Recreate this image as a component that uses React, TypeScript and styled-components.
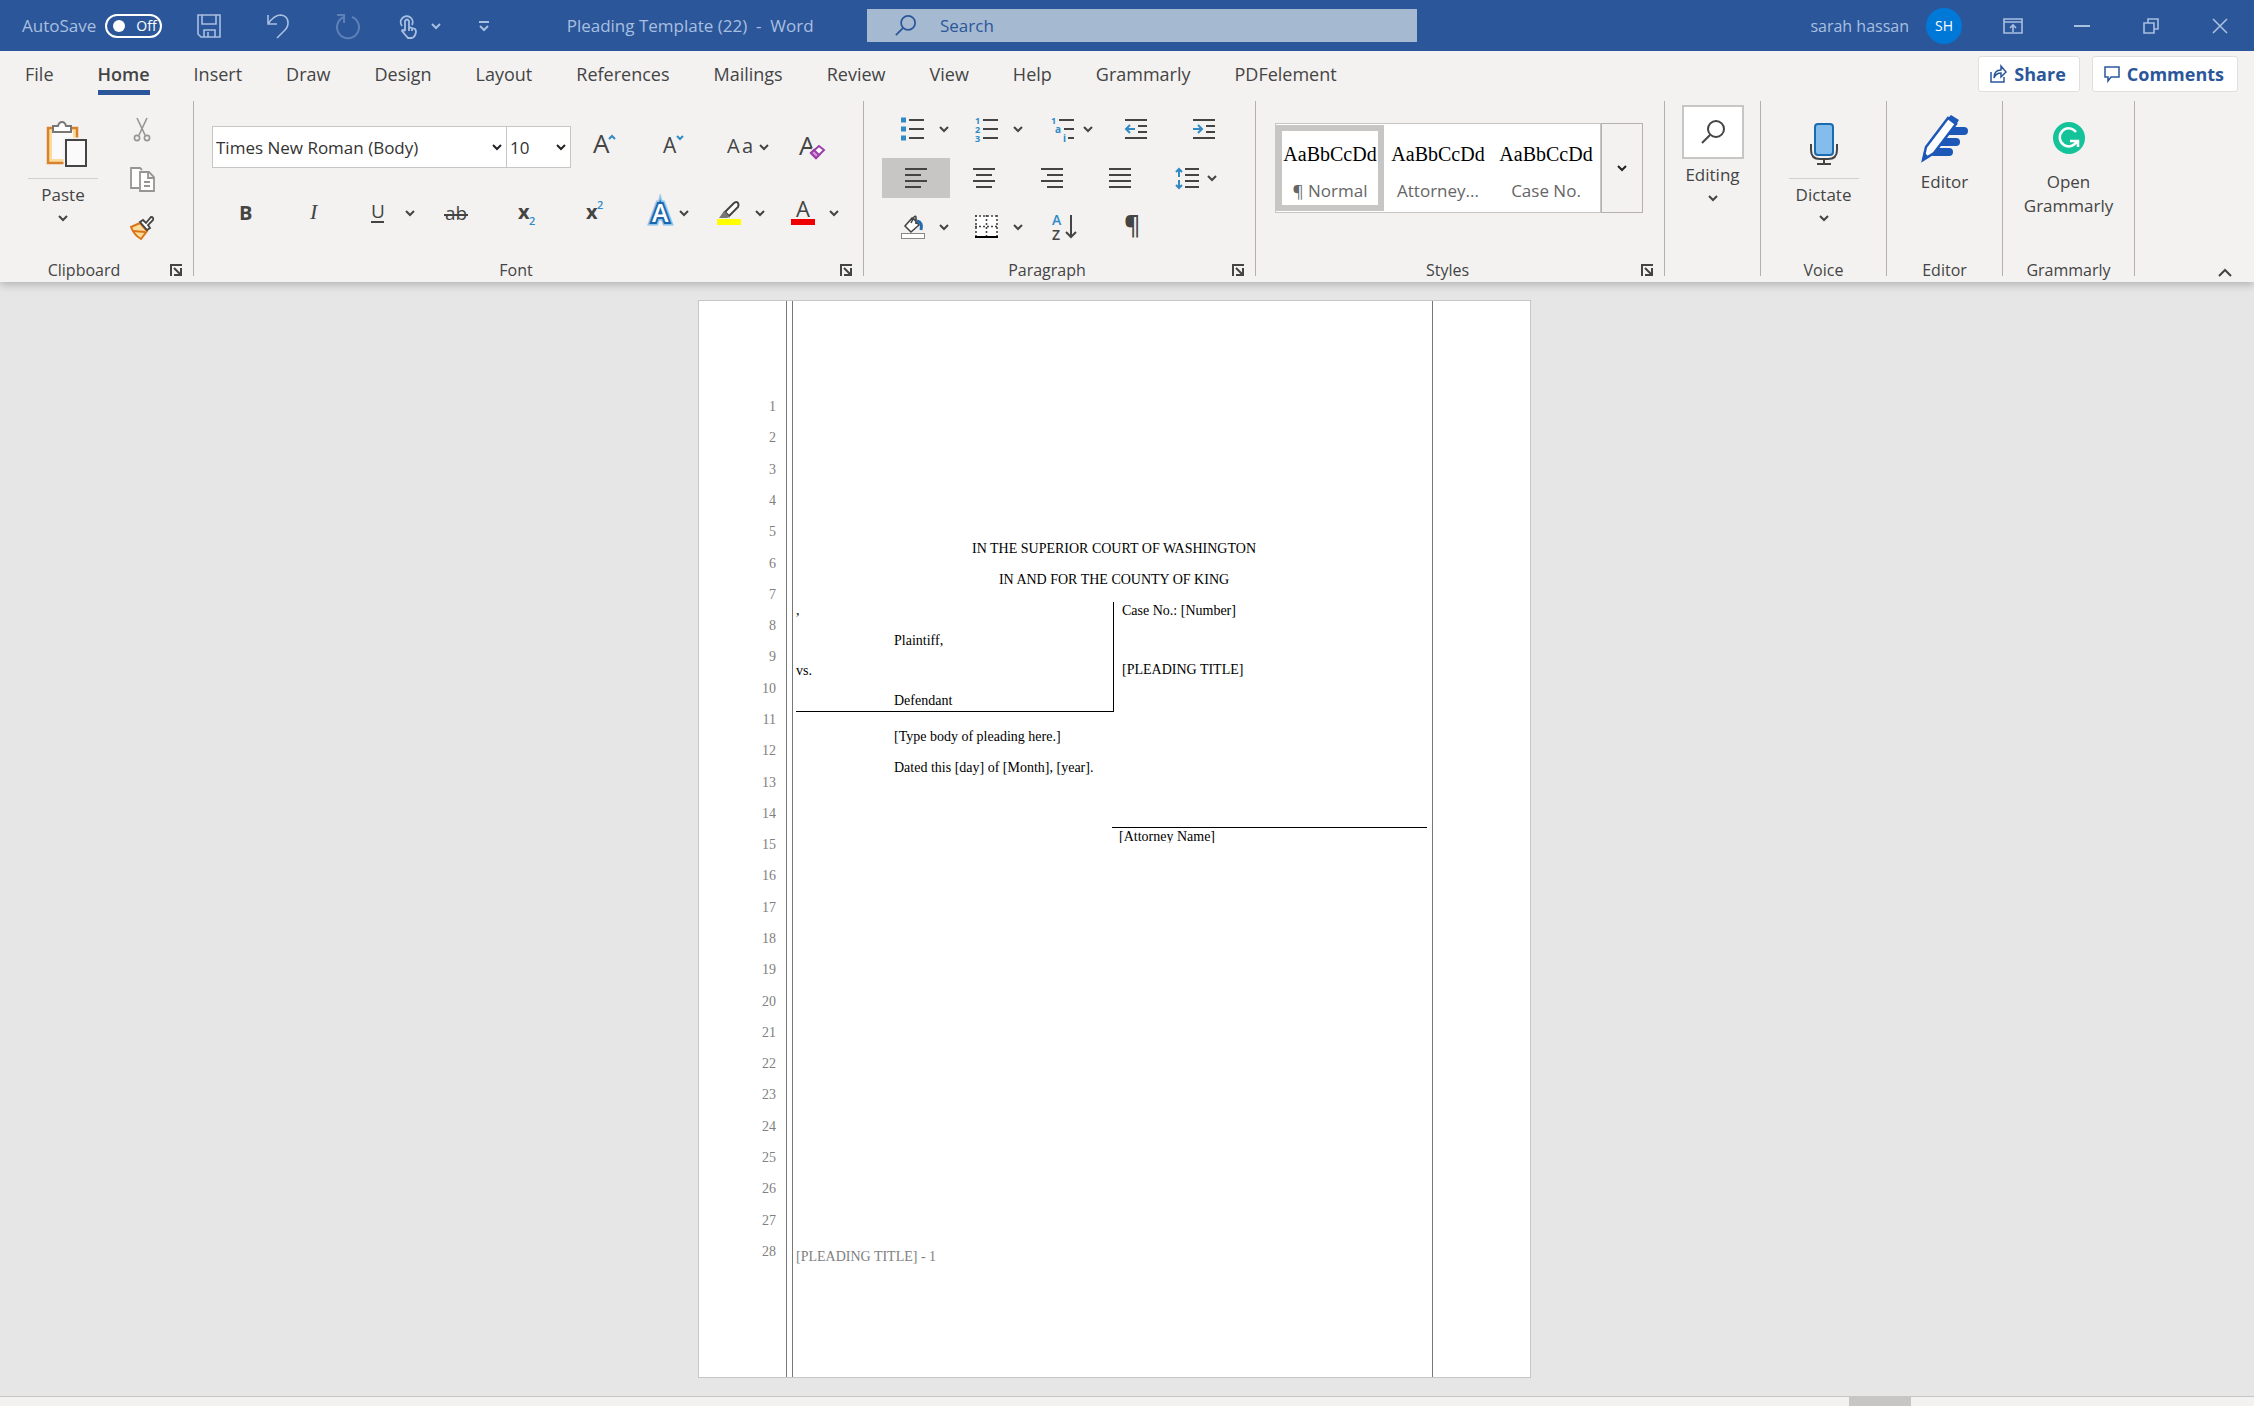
import React from "react";
import styled, { createGlobalStyle, css } from "styled-components";

const ui = '"Open Sans", "Noto Sans", sans-serif';
const serif = '"Liberation Serif", "Times New Roman", serif';
const ink = "#444444";
const brand = "#2b579a";
const accent = "#2f8ac6";
const titleInk = "#a9bfe0";

const GlobalStyle = createGlobalStyle`
  *, *::before, *::after { box-sizing: border-box; }
  body { margin: 0; font-family: ${ui}; color: ${ink}; background: #e6e6e6; }
  button, input, select { font: inherit; color: inherit; margin: 0; }
  button { border: 0; padding: 0; background: none; cursor: pointer; }
  svg { display: block; overflow: visible; flex: none; }
`;

const Window = styled.div`
  min-height: 100vh;
  display: flex;
  flex-direction: column;
`;

/* ---------- Title bar ---------- */

const TitleBar = styled.header`
  display: grid;
  grid-template-columns: 867fr 550fr 837fr;
  align-items: center;
  height: 51px;
  background: ${brand};
  color: ${titleInk};
  font-size: 17px;
`;

const TitleLeft = styled.div`
  display: flex;
  align-items: center;
  padding-left: 22px;
`;

const AutoSave = styled.label`
  display: flex;
  align-items: center;
  gap: 9px;
  margin-right: 12px;
`;

const Pill = styled.span`
  display: flex;
  align-items: center;
  gap: 11px;
  width: 57px;
  height: 24px;
  padding-left: 6px;
  border: 2px solid #ffffff;
  border-radius: 12px;
  color: #ffffff;
  font-size: 14px;
`;

const Knob = styled.input`
  appearance: none;
  width: 12px;
  height: 12px;
  border-radius: 50%;
  background: #ffffff;
`;

const QuickButton = styled.button<{ $width?: number; $dim?: boolean }>`
  display: flex;
  align-items: center;
  justify-content: center;
  gap: 14px;
  width: ${(p) => p.$width ?? 69}px;
  height: 40px;
  opacity: ${(p) => (p.$dim ? 0.4 : 1)};
`;

const DocName = styled.div`
  flex: 1;
  padding-left: 4px;
  text-align: center;
  white-space: pre;
`;

const SearchBox = styled.label`
  display: flex;
  align-items: center;
  gap: 24px;
  height: 33px;
  padding-left: 28px;
  background: #a5b9d1;
  color: ${brand};
`;

const SearchInput = styled.input`
  flex: 1;
  min-width: 0;
  border: 0;
  padding: 0;
  background: none;
  outline: none;
  font-size: 17px;
  &::placeholder { color: ${brand}; opacity: 1; }
`;

const TitleRight = styled.div`
  display: flex;
  align-items: center;
  justify-content: flex-end;
`;

const Account = styled.button`
  display: flex;
  align-items: center;
  gap: 17px;
  margin-right: 16px;
  font-size: 16px;
`;

const Avatar = styled.span`
  display: grid;
  place-items: center;
  width: 36px;
  height: 36px;
  border-radius: 50%;
  background: #0078d7;
  color: #ffffff;
  font-size: 14px;
`;

const WindowButton = styled.button`
  display: grid;
  place-items: center;
  width: 69px;
  height: 50px;
`;

/* ---------- Tabs ---------- */

const TabBar = styled.nav`
  position: relative;
  z-index: 1;
  display: flex;
  align-items: center;
  height: 45px;
  padding: 0 16px 0 25px;
  background: #f3f2f1;
  font-size: 18px;
`;

const Tabs = styled.div`
  display: flex;
  gap: 44px;
  flex: 1;
`;

const Tab = styled.button<{ $active?: boolean }>`
  padding: 0;
  line-height: 32px;
  border-bottom: 5px solid transparent;
  border-top: 5px solid transparent;
  ${(p) =>
    p.$active &&
    css`
      font-weight: 600;
      border-bottom-color: ${brand};
    `}
`;

const CardButton = styled.button`
  display: flex;
  align-items: center;
  gap: 7px;
  height: 36px;
  padding: 0 13px 0 11px;
  margin-left: 12px;
  background: #ffffff;
  border: 1px solid #e1dfdd;
  border-radius: 3px;
  color: ${brand};
  font-weight: 700;
`;

/* ---------- Ribbon ---------- */

const Ribbon = styled.section`
  position: relative;
  display: flex;
  height: 186px;
  background: #f3f2f1;
  box-shadow: 0 3px 8px rgba(0, 0, 0, 0.22);
`;

const Divider = styled.div`
  width: 1px;
  margin: 5px 0 6px;
  background: #b3b0ad;
`;

const Group = styled.div<{ $width: number }>`
  display: flex;
  flex-direction: column;
  width: ${(p) => p.$width}px;
`;

const GroupBody = styled.div<{ $top?: number; $left?: number; $center?: boolean }>`
  display: flex;
  flex: 1;
  min-height: 0;
  padding: ${(p) => p.$top ?? 0}px 0 0 ${(p) => p.$left ?? 0}px;
  justify-content: ${(p) => (p.$center ? "center" : "flex-start")};
  align-items: flex-start;
`;

const GroupFoot = styled.div`
  display: flex;
  align-items: center;
  padding-right: 11px;
  font-size: 16px;
  line-height: 24px;
`;

const GroupName = styled.div`
  flex: 1;
  padding-right: 2px;
  text-align: center;
`;

const PlainFoot = styled.div`
  font-size: 16px;
  line-height: 24px;
  text-align: center;
`;

const Rows = styled.div<{ $gap: number }>`
  display: flex;
  flex-direction: column;
  gap: ${(p) => p.$gap}px;
`;

const Row = styled.div`
  display: flex;
  align-items: center;
`;

const ToolButton = styled.button<{ $on?: boolean }>`
  display: grid;
  place-items: center;
  width: 68px;
  height: 40px;
  background: ${(p) => (p.$on ? "#c8c6c4" : "none")};
`;

const SplitBox = styled.div<{ $tight?: boolean }>`
  display: flex;
  width: ${(p) => (p.$tight ? 72 : 74)}px;
  height: 40px;
`;

const SplitMain = styled.button<{ $tight?: boolean }>`
  display: flex;
  align-items: center;
  width: ${(p) => (p.$tight ? 49 : 53)}px;
  padding-left: ${(p) => (p.$tight ? 21 : 19)}px;
`;

const SplitArrow = styled.button`
  display: grid;
  place-items: center;
  width: 18px;
`;

const BigButton = styled.button`
  display: flex;
  flex-direction: column;
  align-items: center;
  font-size: 17px;
  line-height: 24px;
`;

const BigIcon = styled.span<{ $height: number; $line?: boolean }>`
  display: grid;
  place-items: center;
  width: 70px;
  height: ${(p) => p.$height}px;
  border-bottom: 1px solid ${(p) => (p.$line ? "#d2d0ce" : "transparent")};
`;

const BigText = styled.span`
  padding-top: 4px;
  margin-bottom: 8px;
`;

const SmallStack = styled.div`
  display: flex;
  flex-direction: column;
  gap: 9px;
  margin-left: 24px;
`;

const SmallButton = styled.button`
  display: grid;
  place-items: center;
  width: 40px;
  height: 40px;
`;

const Combo = styled.label<{ $width: number }>`
  position: relative;
  display: block;
  width: ${(p) => p.$width}px;
  margin-right: -1px;
  height: 42px;
  border: 1px solid #c8c6c4;
  background: #ffffff;
  color: #333333;
`;

const ComboSelect = styled.select`
  appearance: none;
  width: 100%;
  height: 100%;
  padding: 0 20px 0 3px;
  border: 0;
  background: none;
  outline: none;
  font-size: 17px;
`;

const ComboArrow = styled.span`
  position: absolute;
  right: 4px;
  top: 17px;
  pointer-events: none;
`;

const Gallery = styled.div`
  display: flex;
  height: 90px;
  border: 1px solid #c8c6c4;
  background: #ffffff;
`;

const StyleCard = styled.button<{ $on?: boolean }>`
  display: flex;
  flex-direction: column;
  align-items: center;
  gap: 8px;
  width: 108px;
  height: 86px;
  margin-top: 1px;
  padding-top: 8px;
  border: 6px solid ${(p) => (p.$on ? "#c8c6c4" : "transparent")};
  color: #666666;
  font-size: 17px;
  line-height: 28px;
`;

const Sample = styled.span`
  color: #000000;
  font-family: ${serif};
  font-size: 20px;
  line-height: 30px;
`;

const GalleryMore = styled.button`
  display: grid;
  place-items: center;
  width: 42px;
  height: 90px;
  border: 1px solid #b3b0ad;
`;

const EditingBox = styled.span`
  display: grid;
  place-items: center;
  width: 62px;
  height: 54px;
  border: 2px solid #c8c6c4;
  background: #ffffff;
`;

const Collapse = styled.button`
  align-self: flex-end;
  margin: 0 22px 5px auto;
`;

/* ---------- Document ---------- */

const Canvas = styled.main`
  flex: 1;
  padding: 18px 25px 18px 0;
  background: #e6e6e6;
`;

const Sheet = styled.article`
  display: flex;
  width: 100%;
  max-width: 833px;
  aspect-ratio: 833 / 1078;
  margin: 0 auto;
  border: 1px solid #c6c6c6;
  background: #ffffff;
  color: #000000;
  font-family: ${serif};
  font-size: 14px;
  line-height: 17px;
`;

const LineNumbers = styled.ol`
  display: grid;
  grid-auto-rows: 1fr;
  align-items: center;
  width: 88px;
  margin: 0 5px 0 0;
  padding: 90px 10px 110px 0;
  border-right: 1px solid #777777;
  color: #808080;
  list-style: none;
  text-align: right;
`;

const Pleading = styled.div`
  display: flex;
  flex-direction: column;
  flex: 1;
  margin-right: 97px;
  padding: 232px 0 112px 3px;
  border-left: 1px solid #777777;
  border-right: 1px solid #777777;
`;

const CourtLine = styled.div`
  line-height: 31px;
  text-align: center;
`;

const Caption = styled.div`
  display: grid;
  grid-template-columns: 1fr 1fr;
  margin: 7px 0 9px;
`;

const Parties = styled.div`
  display: grid;
  gap: 13px;
  padding-bottom: 2px;
  border-right: 1px solid #000000;
  border-bottom: 1px solid #000000;
`;

const CaseInfo = styled.div`
  display: grid;
  align-content: start;
  gap: 42px;
  padding-left: 8px;
`;

const Indented = styled.div`
  padding-left: 98px;
`;

const Paragraph = styled.p`
  margin: 0;
  padding-left: 98px;
  line-height: 31px;
`;

const Signature = styled.div`
  align-self: flex-end;
  width: 315px;
  height: 16px;
  margin: 44px 5px 0 0;
  padding-left: 7px;
  border-top: 1px solid #000000;
  overflow: hidden;
`;

const PageFooter = styled.footer`
  margin-top: auto;
  color: #808080;
`;

const StatusBar = styled.footer`
  display: flex;
  justify-content: flex-end;
  height: 10px;
  padding-right: 343px;
  border-top: 1px solid #c6c6c6;
  background: #f3f2f1;
`;

const ZoomThumb = styled.div`
  width: 62px;
  background: #c8c6c4;
`;

/* ---------- Icons ---------- */

const Svg = ({ w = 24, h = 24, children, color = ink, sw = 2 }: {
  w?: number; h?: number; children: React.ReactNode; color?: string; sw?: number;
}) => (
  <svg width={w} height={h} viewBox={`0 0 ${w} ${h}`} fill="none" stroke={color} strokeWidth={sw} aria-hidden="true">
    {children}
  </svg>
);

const Glyph = ({ x, y, size, children, fill = ink, family = ui, weight = 400, slant = "normal" }: {
  x: number; y: number; size: number; children: string; fill?: string; family?: string; weight?: number; slant?: string;
}) => (
  <text x={x} y={y} fontSize={size} fill={fill} stroke="none" fontFamily={family} fontWeight={weight} fontStyle={slant}>
    {children}
  </text>
);

const Chevron = ({ color = ink }: { color?: string }) => (
  <Svg w={10} h={6} color={color}><path d="M1 1l4 4 4-4" /></Svg>
);

const Launcher = () => (
  <Svg w={12} h={12}><path d="M1 12V1h11M4 4l6 6M11 4v7H4" /></Svg>
);

const Lines = ({ rows }: { rows: [number, number, number][] }) => (
  <>{rows.map(([y, a, b]) => <path key={y} d={`M${a} ${y}H${b}`} />)}</>
);

const BulletsIcon = () => (
  <Svg>
    <path d="M0 3h5M0 12h5M0 21h5" stroke={accent} strokeWidth={5} />
    <Lines rows={[[3, 8, 23], [12, 8, 23], [21, 8, 23]]} />
  </Svg>
);

const NumberIcon = () => (
  <Svg>
    <Glyph x={0} y={7} size={9} fill={accent} weight={700}>1</Glyph>
    <Glyph x={0} y={16} size={9} fill={accent} weight={700}>2</Glyph>
    <Glyph x={0} y={25} size={9} fill={accent} weight={700}>3</Glyph>
    <Lines rows={[[3, 8, 23], [12, 8, 23], [21, 8, 23]]} />
  </Svg>
);

const MultiIcon = () => (
  <Svg>
    <Glyph x={0} y={7} size={9} fill={accent} weight={700}>1</Glyph>
    <Glyph x={4} y={16} size={10} fill={accent} weight={700}>a</Glyph>
    <Glyph x={12} y={25} size={10} fill={accent} weight={700}>i</Glyph>
    <Lines rows={[[3, 8, 23], [12, 13, 23], [21, 17, 23]]} />
  </Svg>
);

const DentIcon = ({ out }: { out?: boolean }) => (
  <Svg w={22}>
    <Lines rows={[[3, 0, 22], [9, 13, 22], [15, 13, 22], [21, 0, 22]]} />
    <path stroke={accent} d={out ? "M10 12H1M5 8l-4 4 4 4" : "M0 12h9M5 8l4 4-4 4"} />
  </Svg>
);

const AlignIcon = ({ kind }: { kind: "left" | "center" | "right" | "full" }) => {
  const short: Record<string, [number, number]> = { left: [0, 16], center: [3, 19], right: [6, 22], full: [0, 22] };
  const [a, b] = short[kind];
  return <Svg w={22}><Lines rows={[[3, 0, 22], [9, a, b], [15, 0, 22], [21, a, b]]} /></Svg>;
};

const SpacingIcon = () => (
  <Svg>
    <Lines rows={[[3, 10, 24], [9, 10, 24], [15, 10, 24], [21, 10, 24]]} />
    <path stroke={accent} d="M4 11V3M1 6l3-3 3 3M4 14v8M1 19l3 3 3-3" />
  </Svg>
);

const BucketIcon = () => (
  <Svg>
    <path d="M12 3l6 7-8 7-6-6 7-8zM10 8l3-6q2-2 2 1v6" fill="#fff" strokeWidth={1.6} />
    <path d="M16 6q6 1 4 9" stroke="#1f6cb0" strokeWidth={3} />
    <rect x="0.5" y="18.5" width="23" height="5" fill="#fff" stroke="#8a8886" strokeWidth={1} />
  </Svg>
);

const BorderIcon = () => (
  <Svg>
    <path d="M1 1h22v20H1z" fill="#fff" stroke="none" />
    <path d="M0 1h23M0 11.500h23M1 0v21M11.500 0v21M22 0v21" strokeDasharray="2 2" strokeWidth={1.6} />
    <path d="M0 22h23" stroke="#000" />
  </Svg>
);

const SortIcon = () => (
  <Svg>
    <Glyph x={0} y={10} size={14} fill={accent} weight={600}>A</Glyph>
    <Glyph x={0} y={25} size={14} weight={600}>Z</Glyph>
    <path d="M19 0v22M14 17l5 5 5-5" />
  </Svg>
);

const PasteIcon = () => (
  <Svg w={42} h={46}>
    <g transform="translate(3 0)">
      <path d="M3 7h29v35H3z" fill="#fbdc9a" stroke="#d9822b" strokeWidth={2.5} />
      <path d="M7 10h21v28H7z" fill="#fafafa" stroke="none" />
      <path d="M8 11V5h5q1-4 4-4t4 4h5v6z" fill="#fff" stroke="#797775" />
      <path d="M21 19h20v26H21z" fill="#fafafa" stroke="#f3f2f1" strokeWidth={5} />
      <path d="M21 19h20v26H21z" fill="#fafafa" />
    </g>
  </Svg>
);

const CutIcon = () => (
  <Svg color="#979593" sw={1.6}>
    <path d="M7 0l8 17M17 0L9 17" />
    <circle cx="7" cy="20" r="2.600" /><circle cx="17" cy="20" r="2.600" />
  </Svg>
);

const CopyIcon = () => (
  <Svg color="#979593" sw={1.8}>
    <path d="M9 21H1V1h9l2 2" fill="#fff" />
    <path d="M10 5h9l5 5v14H10zM18 5v6h6M14 15h6M14 19h6" fill="#fff" />
  </Svg>
);

const BrushIcon = () => (
  <Svg>
    <path d="M1 11l9-4 7 8-6 8q-7-4-10-12z" fill="#fbdc9a" stroke="#d9741a" />
    <path d="M3 15l12 1" stroke="#d9741a" />
    <path d="M10 6l3-2 3 3 5-6q3 0 2 3l-5 5 2 3-3 2z" fill="#fff" strokeWidth={1.8} />
  </Svg>
);

const EraseIcon = () => (
  <Svg>
    <Glyph x={-1} y={20} size={26}>A</Glyph>
    <path d="M10 18l9-8 5 5-9 8z" fill="#f3f2f1" stroke="#f3f2f1" strokeWidth={4} />
    <path d="M11 18l8-7 5 4-8 8z" fill="#fff" stroke="#9b3fa9" />
    <path d="M11 18l3-3 5 5-3 3z" fill="#d59ade" stroke="#9b3fa9" />
  </Svg>
);

const EffectIcon = () => (
  <svg width={24} height={24} viewBox="0 0 24 24" aria-hidden="true">
    <g fontSize="25" fontFamily={ui} fontWeight={600}>
      <text x="5" y="21" fill="#8fc3ec" stroke="#8fc3ec" strokeWidth={7}>A</text>
      <text x="5" y="21" fill="#1a66ad" stroke="#1a66ad" strokeWidth={4}>A</text>
      <text x="5" y="21" fill="#ffffff">A</text>
    </g>
  </svg>
);

const MarkerIcon = () => (
  <Svg>
    <path d="M8 11l9-9q3-2 4 0t0 4l-9 9z" fill="#fff" />
    <path d="M7 10l6 6-3 1H2z" fill="#797775" stroke="none" />
    <path d="M0 21h24" stroke="#ffff00" strokeWidth={6} />
  </Svg>
);

const FontColorIcon = () => (
  <Svg>
    <Glyph x={5} y={16} size={22}>A</Glyph>
    <path d="M0 21h24" stroke="#ee0000" strokeWidth={6} />
  </Svg>
);

const MicIcon = () => (
  <Svg w={28} h={42}>
    <path d="M1 21v6q0 9 9 9h8q9 0 9-9v-6M14 36v5M7 41h14" />
    <rect x="5" y="1" width="18" height="31" rx="3" fill="#84bdec" stroke="#1a6bb0" />
  </Svg>
);

const EditorIcon = () => (
  <Svg w={46} h={46} color="#1d58b8">
    <path d="M26 16h16M20 27h14M12 37h15" strokeWidth={8} strokeLinecap="round" />
    <path d="M1 45l3-13L26 3l8 6-22 29z" fill="#fff" strokeWidth={2.5} />
    <path d="M26 3l3-3 8 5-3 5zM0 46l2-9 5 5z" fill="#1d58b8" stroke="none" />
  </Svg>
);

const GrammarlyIcon = () => (
  <Svg w={32} h={32}>
    <circle cx="16" cy="16" r="16" fill="#15c39a" stroke="none" />
    <path d="M23 10a9 9 0 1 0 1 9M17 19h8v6" stroke="#fff" strokeWidth={2.5} />
  </Svg>
);

const LensIcon = ({ color = ink, size = 24 }: { color?: string; size?: number }) => (
  <svg width={size} height={size} viewBox="0 0 24 24" fill="none" stroke={color} strokeWidth={2} aria-hidden="true">
    <circle cx="15" cy="9" r="8" /><path d="M9 15l-8 8" />
  </svg>
);

/* ---------- Composite controls ---------- */

const Split = ({ label, tight, children }: { label: string; tight?: boolean; children: React.ReactNode }) => (
  <SplitBox $tight={tight}>
    <SplitMain $tight={tight} aria-label={label}>{children}</SplitMain>
    <SplitArrow aria-label={`${label} options`}><Chevron /></SplitArrow>
  </SplitBox>
);

const Tool = ({ label, on, children }: { label: string; on?: boolean; children: React.ReactNode }) => (
  <ToolButton aria-label={label} $on={on}>{children}</ToolButton>
);

const Foot = ({ name }: { name: string }) => (
  <GroupFoot>
    <GroupName>{name}</GroupName>
    <button aria-label={`${name} settings`}><Launcher /></button>
  </GroupFoot>
);

const tabs = ["File", "Home", "Insert", "Draw", "Design", "Layout", "References", "Mailings", "Review", "View", "Help", "Grammarly", "PDFelement"];
const styleNames = ["¶ Normal", "Attorney...", "Case No."];
const lineNumbers = Array.from({ length: 28 }, (_, i) => i + 1);

export default function App() {
  return (
    <Window>
      <GlobalStyle />
      <TitleBar>
        <TitleLeft>
          <AutoSave>
            AutoSave
            <Pill><Knob type="checkbox" />Off</Pill>
          </AutoSave>
          <QuickButton aria-label="Save">
            <Svg color={titleInk} sw={1.6}><path d="M1 1h22v22H4l-3-3zM5 1v9h14V1M7 23v-7h11v7M11 18v5" /></Svg>
          </QuickButton>
          <QuickButton aria-label="Undo">
            <Svg color={titleInk} sw={1.6}><path d="M2 1v9h9M2 10q6-9 13-9 7 1 7 8 0 5-5 9l-6 6" /></Svg>
          </QuickButton>
          <QuickButton aria-label="Redo" $dim>
            <Svg color={titleInk}><path d="M2 1h7v8M9 3a11 11 0 1 0 8 0" /></Svg>
          </QuickButton>
          <QuickButton aria-label="Touch mode" $width={78}>
            <Svg w={18} color={titleInk} sw={1.8}>
              <path d="M3 12a6 6 0 1 1 10-1M6 17V7q2-3 4 0v6l6 2q1 1 1 3-1 5-4 6H9l-6-7q0-2 3 0M10 13v4M13 14v3" />
            </Svg>
            <Chevron color={titleInk} />
          </QuickButton>
          <QuickButton aria-label="Customize toolbar" $width={50}>
            <Svg w={10} h={10} color={titleInk}><path d="M0 1h10M1 5l4 4 4-4" /></Svg>
          </QuickButton>
          <DocName>{"Pleading Template (22)  -  Word"}</DocName>
        </TitleLeft>
        <SearchBox>
          <LensIcon color={brand} size={21} />
          <SearchInput type="search" placeholder="Search" aria-label="Search" />
        </SearchBox>
        <TitleRight>
          <Account>sarah hassan<Avatar>SH</Avatar></Account>
          <WindowButton aria-label="Ribbon display options">
            <Svg w={20} h={16} color={titleInk} sw={1.6}><path d="M1 1h18v14H1zM1 4h18M10 14V7M7 10l3-3 3 3" /></Svg>
          </WindowButton>
          <WindowButton aria-label="Minimize">
            <Svg w={16} h={16} color={titleInk}><path d="M0 8h16" /></Svg>
          </WindowButton>
          <WindowButton aria-label="Restore">
            <Svg w={16} h={16} color={titleInk} sw={1.6}><path d="M1 5h10v10H1zM5 5V1h10v10h-4" /></Svg>
          </WindowButton>
          <WindowButton aria-label="Close">
            <Svg w={16} h={16} color={titleInk} sw={1.6}><path d="M1 1l14 14M15 1L1 15" /></Svg>
          </WindowButton>
        </TitleRight>
      </TitleBar>

      <TabBar>
        <Tabs>
          {tabs.map((t) => <Tab key={t} $active={t === "Home"}>{t}</Tab>)}
        </Tabs>
        <CardButton>
          <Svg w={17} h={18} color={brand} sw={1.5}><path d="M1 7v10h13v-5M4 13q0-8 7-8V1l5 6-5 5V8q-5 0-7 5z" /></Svg>
          Share
        </CardButton>
        <CardButton>
          <Svg w={16} h={16} color={brand} sw={1.5}><path d="M1 1h14v10H7l-3 4v-4H1z" /></Svg>
          Comments
        </CardButton>
      </TabBar>

      <Ribbon>
        <Group $width={193}>
          <GroupBody $top={14} $left={28}>
            <BigButton>
              <BigIcon $height={69} $line><PasteIcon /></BigIcon>
              <BigText>Paste</BigText>
              <Chevron />
            </BigButton>
            <SmallStack>
              <SmallButton aria-label="Cut"><CutIcon /></SmallButton>
              <SmallButton aria-label="Copy"><CopyIcon /></SmallButton>
              <SmallButton aria-label="Format painter"><BrushIcon /></SmallButton>
            </SmallStack>
          </GroupBody>
          <Foot name="Clipboard" />
        </Group>
        <Divider />

        <Group $width={669}>
          <GroupBody $top={30} $left={18}>
            <Rows $gap={25}>
              <Row>
                <Combo $width={295}>
                  <ComboSelect aria-label="Font" defaultValue="body">
                    <option value="body">Times New Roman (Body)</option>
                  </ComboSelect>
                  <ComboArrow><Chevron color="#222" /></ComboArrow>
                </Combo>
                <Combo $width={65}>
                  <ComboSelect aria-label="Font size" defaultValue="10">
                    <option>10</option>
                  </ComboSelect>
                  <ComboArrow><Chevron color="#222" /></ComboArrow>
                </Combo>
                <Tool label="Increase font size">
                  <Svg><Glyph x={1} y={18} size={26}>A</Glyph><path d="M17 4l3-3 3 3" stroke={accent} /></Svg>
                </Tool>
                <Tool label="Decrease font size">
                  <Svg><Glyph x={3} y={18} size={21}>A</Glyph><path d="M17 1l3 3 3-3" stroke={accent} /></Svg>
                </Tool>
                <Split label="Change case" tight>
                  <Svg><Glyph x={0} y={18} size={20}>A</Glyph><Glyph x={15} y={18} size={20}>a</Glyph></Svg>
                </Split>
                <Tool label="Clear formatting"><EraseIcon /></Tool>
              </Row>
              <Row>
                <Tool label="Bold"><Svg><Glyph x={5} y={19} size={20} weight={700}>B</Glyph></Svg></Tool>
                <Tool label="Italic"><Svg><Glyph x={8} y={18} size={22} family={serif} slant="italic">I</Glyph></Svg></Tool>
                <Split label="Underline">
                  <Svg><Glyph x={4} y={17} size={19}>U</Glyph><path d="M4 21h13" /></Svg>
                </Split>
                <Tool label="Strikethrough">
                  <Svg><Glyph x={1} y={19} size={19}>ab</Glyph><path d="M0 14h24" /></Svg>
                </Tool>
                <Tool label="Subscript">
                  <Svg><Glyph x={6} y={18} size={20} weight={700}>x</Glyph><Glyph x={17} y={24} size={11} weight={600} fill={accent}>2</Glyph></Svg>
                </Tool>
                <Tool label="Superscript">
                  <Svg><Glyph x={6} y={18} size={20} weight={700}>x</Glyph><Glyph x={17} y={8} size={11} weight={600} fill={accent}>2</Glyph></Svg>
                </Tool>
                <Split label="Text effects" tight><EffectIcon /></Split>
                <Split label="Highlight color"><MarkerIcon /></Split>
                <Split label="Font color"><FontColorIcon /></Split>
              </Row>
            </Rows>
          </GroupBody>
          <Foot name="Font" />
        </Group>
        <Divider />

        <Group $width={391}>
          <GroupBody $top={13} $left={18}>
            <Rows $gap={9}>
              <Row>
                <Split label="Bullets"><BulletsIcon /></Split>
                <Split label="Numbering"><NumberIcon /></Split>
                <Split label="Multilevel list" tight><MultiIcon /></Split>
                <Tool label="Decrease indent"><DentIcon out /></Tool>
                <Tool label="Increase indent"><DentIcon /></Tool>
              </Row>
              <Row>
                <Tool label="Align left" on><AlignIcon kind="left" /></Tool>
                <Tool label="Center"><AlignIcon kind="center" /></Tool>
                <Tool label="Align right"><AlignIcon kind="right" /></Tool>
                <Tool label="Justify"><AlignIcon kind="full" /></Tool>
                <Split label="Line spacing" tight><SpacingIcon /></Split>
              </Row>
              <Row>
                <Split label="Shading"><BucketIcon /></Split>
                <Split label="Borders"><BorderIcon /></Split>
                <Tool label="Sort"><SortIcon /></Tool>
                <Tool label="Show marks"><Svg><Glyph x={4} y={19} size={25} weight={600}>¶</Glyph></Svg></Tool>
              </Row>
            </Rows>
          </GroupBody>
          <Foot name="Paragraph" />
        </Group>
        <Divider />

        <Group $width={408}>
          <GroupBody $top={27} $left={19}>
            <Gallery>
              {styleNames.map((s, i) => (
                <StyleCard key={s} $on={i === 0}><Sample>AaBbCcDd</Sample>{s}</StyleCard>
              ))}
            </Gallery>
            <GalleryMore aria-label="More styles"><Chevron color="#222" /></GalleryMore>
          </GroupBody>
          <Foot name="Styles" />
        </Group>
        <Divider />

        <Group $width={95}>
          <GroupBody $top={9} $center>
            <BigButton>
              <EditingBox><LensIcon /></EditingBox>
              <BigText>Editing</BigText>
              <Chevron />
            </BigButton>
          </GroupBody>
        </Group>
        <Divider />

        <Group $width={125}>
          <GroupBody $top={14} $center>
            <BigButton>
              <BigIcon $height={69} $line><MicIcon /></BigIcon>
              <BigText>Dictate</BigText>
              <Chevron />
            </BigButton>
          </GroupBody>
          <PlainFoot>Voice</PlainFoot>
        </Group>
        <Divider />

        <Group $width={115}>
          <GroupBody $top={14} $center>
            <BigButton>
              <BigIcon $height={56}><EditorIcon /></BigIcon>
              <BigText>Editor</BigText>
            </BigButton>
          </GroupBody>
          <PlainFoot>Editor</PlainFoot>
        </Group>
        <Divider />

        <Group $width={131}>
          <GroupBody $top={14} $center>
            <BigButton>
              <BigIcon $height={56}><GrammarlyIcon /></BigIcon>
              <BigText>Open<br />Grammarly</BigText>
            </BigButton>
          </GroupBody>
          <PlainFoot>Grammarly</PlainFoot>
        </Group>
        <Divider />
        <Collapse aria-label="Collapse ribbon"><Svg w={14} h={9}><path d="M1 8l6-6 6 6" /></Svg></Collapse>
      </Ribbon>

      <Canvas>
        <Sheet>
          <LineNumbers>
            {lineNumbers.map((n) => <li key={n}>{n}</li>)}
          </LineNumbers>
          <Pleading>
            <CourtLine>IN THE SUPERIOR COURT OF WASHINGTON</CourtLine>
            <CourtLine>IN AND FOR THE COUNTY OF KING</CourtLine>
            <Caption>
              <Parties>
                <div>,</div>
                <Indented>Plaintiff,</Indented>
                <div>vs.</div>
                <Indented>Defendant</Indented>
              </Parties>
              <CaseInfo>
                <div>Case No.: [Number]</div>
                <div>[PLEADING TITLE]</div>
              </CaseInfo>
            </Caption>
            <Paragraph>[Type body of pleading here.]</Paragraph>
            <Paragraph>Dated this [day] of [Month], [year].</Paragraph>
            <Signature>[Attorney Name]</Signature>
            <PageFooter>[PLEADING TITLE] - 1</PageFooter>
          </Pleading>
        </Sheet>
      </Canvas>
      <StatusBar><ZoomThumb /></StatusBar>
    </Window>
  );
}
